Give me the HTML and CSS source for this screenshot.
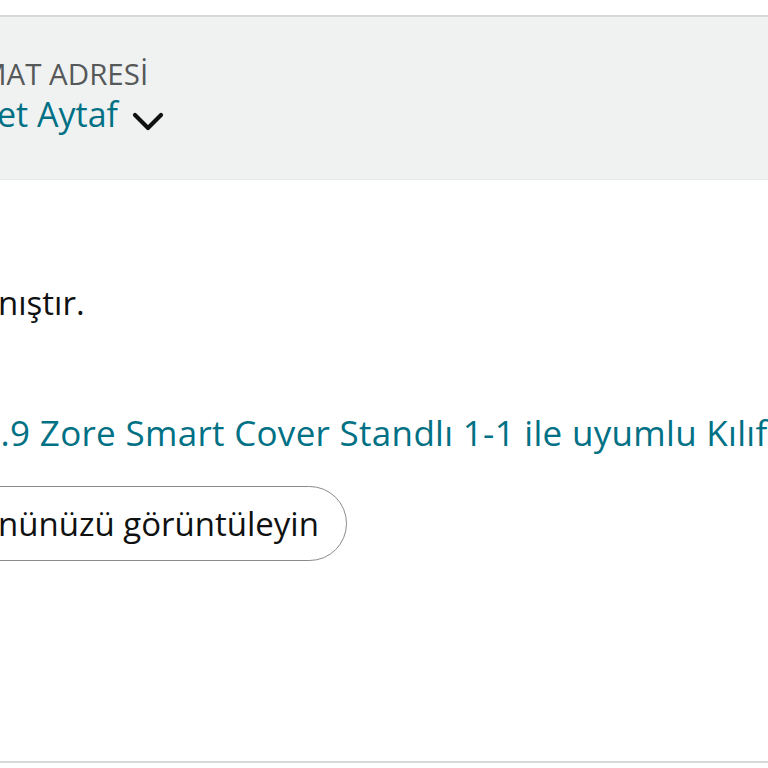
FILE: index.html
```html
<!DOCTYPE html>
<html lang="tr">
<head>
<meta charset="utf-8">
<title>Sipariş</title>
<link rel="stylesheet" href="styles.css">
</head>
<body>
<div class="page">
  <section class="ship">
    <div class="ship-label"><span class="cut cut-label">MAT ADRESİ</span></div>
    <div class="ship-name"><span class="cut cut-name">et Aytaf</span>
      <svg class="chev" viewBox="0 0 32 20" width="32" height="20" aria-hidden="true"><path d="M3 3 L16 16 L29 3" fill="none" stroke="#0f1111" stroke-width="4.2" stroke-linecap="round" stroke-linejoin="round"/></svg>
    </div>
  </section>
  <section class="content">
    <p class="msg"><span class="cut cut-msg">nıştır.</span></p>
    <a class="prod" href="#"><span class="cut cut-prod">12.9 Zore Smart Cover Standlı 1-1 ile uyumlu Kılıf</span></a>
    <div class="btn-row"><a class="btn" href="#"><span class="cut cut-btn">nünüzü görüntüleyin</span></a></div>
  </section>
  <div class="foot"></div>
</div>
</body>
</html>
```
FILE: styles.css
```css
html, body {
  margin: 0;
  padding: 0;
  background: #ffffff;
  overflow: hidden;
}
body {
  font-family: "Open Sans", "Noto Sans", sans-serif;
  color: #0f1111;
  width: 768px;
  height: 768px;
}
.page {
  padding-top: 15px;
  display: flex;
  flex-direction: column;
  height: 768px;
  box-sizing: border-box;
}
.ship {
  background: #f0f2f2;
  border-top: 2px solid #d5d9d9;
  border-bottom: 1px solid #e6e8e8;
  height: 165px;
  box-sizing: border-box;
  padding-top: 39px;
  overflow: hidden;
}
.ship-label {
  font-size: 29.5px;
  line-height: 36px;
  color: #565959;
  white-space: nowrap;
  overflow: hidden;
}
.ship-name {
  display: flex;
  align-items: center;
  gap: 14px;
  font-size: 34px;
  line-height: 44px;
  color: #007185;
  white-space: nowrap;
}
.chev { flex: none; margin-top: 16px; }
.cut { display: inline-block; white-space: nowrap; }
.cut-label { margin-left: -20px; }
.cut-name { margin-left: -3px; }
.content {
  flex: 1;
  padding-top: 103px;
  overflow: hidden;
}
.msg {
  margin: 0;
  font-size: 33px;
  line-height: 40px;
  white-space: nowrap;
}
.cut-msg { margin-left: -2px; }
.prod {
  display: block;
  margin-top: 88px;
  font-size: 35px;
  letter-spacing: 0.3px;
  line-height: 44px;
  color: #007185;
  text-decoration: none;
  white-space: nowrap;
}
.cut-prod { margin-left: -40px; }
.btn-row {
  margin-top: 31px;
  display: flex;
}
.btn {
  display: flex;
  align-items: center;
  height: 75px;
  box-sizing: border-box;
  margin-left: -40px;
  padding: 0 27px 0 40px;
  border: 1.5px solid #888c8c;
  border-radius: 38px;
  font-size: 33px;
  color: #0f1111;
  text-decoration: none;
  background: #fff;
  overflow: hidden;
}
.cut-btn { margin-left: -3px; }
.foot {
  height: 5px;
  border-top: 2px solid #d5d9d9;
}
```
